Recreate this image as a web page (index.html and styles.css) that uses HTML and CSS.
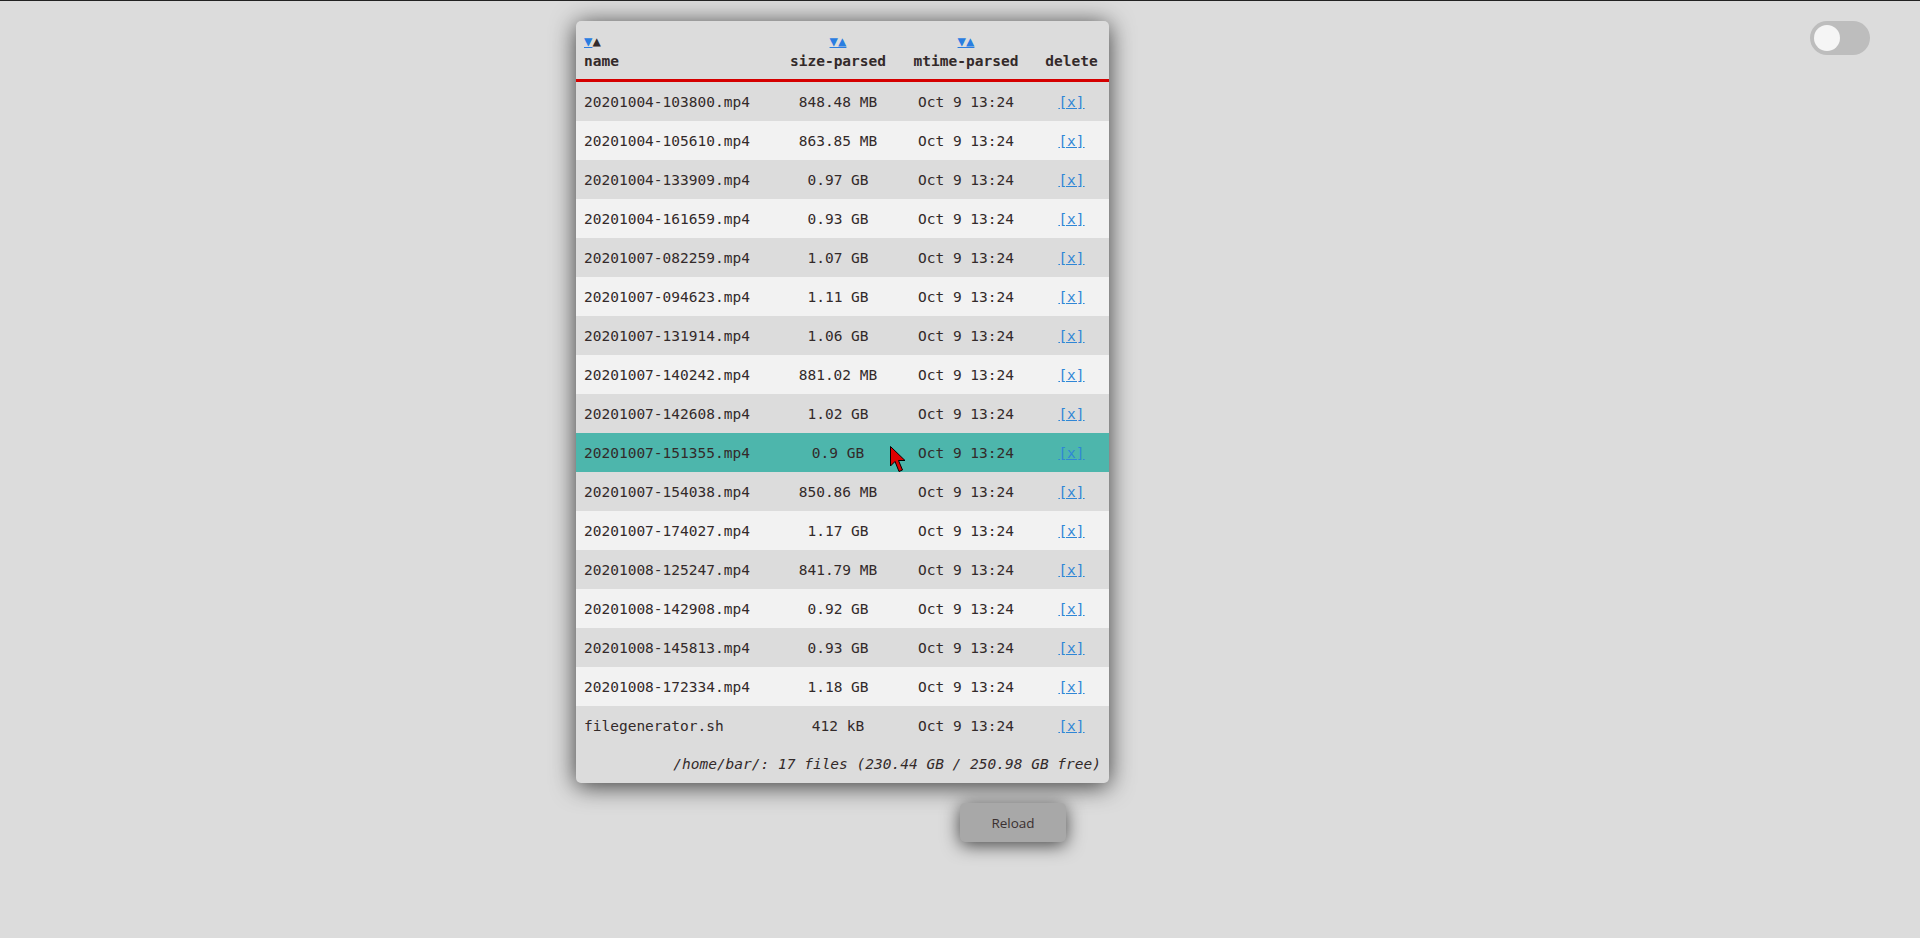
FILE: index.html
```html
<!DOCTYPE html>
<html>
<head>
<meta charset="utf-8">
<title>Files</title>
<link rel="stylesheet" href="styles.css">
</head>
<body>
<div class="page">
  <div class="panel">
    <table class="files">
      <colgroup>
        <col class="c-name"><col class="c-size"><col class="c-mtime"><col class="c-del">
      </colgroup>
      <thead>
        <tr>
          <th class="left"><div class="sort"><a href="#">▼</a><span>▲</span></div><div class="label">name</div></th>
          <th><div class="sort"><a href="#">▼</a><a href="#">▲</a></div><div class="label">size-parsed</div></th>
          <th><div class="sort"><a href="#">▼</a><a href="#">▲</a></div><div class="label">mtime-parsed</div></th>
          <th><div class="sort">&nbsp;</div><div class="label">delete</div></th>
        </tr>
      </thead>
      <tbody>
        <tr><td class="left">20201004-103800.mp4</td><td>848.48 MB</td><td>Oct 9 13:24</td><td><a href="#">[x]</a></td></tr>
        <tr><td class="left">20201004-105610.mp4</td><td>863.85 MB</td><td>Oct 9 13:24</td><td><a href="#">[x]</a></td></tr>
        <tr><td class="left">20201004-133909.mp4</td><td>0.97 GB</td><td>Oct 9 13:24</td><td><a href="#">[x]</a></td></tr>
        <tr><td class="left">20201004-161659.mp4</td><td>0.93 GB</td><td>Oct 9 13:24</td><td><a href="#">[x]</a></td></tr>
        <tr><td class="left">20201007-082259.mp4</td><td>1.07 GB</td><td>Oct 9 13:24</td><td><a href="#">[x]</a></td></tr>
        <tr><td class="left">20201007-094623.mp4</td><td>1.11 GB</td><td>Oct 9 13:24</td><td><a href="#">[x]</a></td></tr>
        <tr><td class="left">20201007-131914.mp4</td><td>1.06 GB</td><td>Oct 9 13:24</td><td><a href="#">[x]</a></td></tr>
        <tr><td class="left">20201007-140242.mp4</td><td>881.02 MB</td><td>Oct 9 13:24</td><td><a href="#">[x]</a></td></tr>
        <tr><td class="left">20201007-142608.mp4</td><td>1.02 GB</td><td>Oct 9 13:24</td><td><a href="#">[x]</a></td></tr>
        <tr class="hover"><td class="left">20201007-151355.mp4</td><td class="cursor-cell">0.9 GB<svg class="cursor" width="16" height="27" viewBox="0 0 16 27"><polygon points="0.5,0.5 0.5,20 5,15.5 9,25.5 12.5,24 8.5,14.5 15,14.5" fill="#e00000" stroke="#000" stroke-width="1"/></svg></td><td>Oct 9 13:24</td><td><a href="#">[x]</a></td></tr>
        <tr><td class="left">20201007-154038.mp4</td><td>850.86 MB</td><td>Oct 9 13:24</td><td><a href="#">[x]</a></td></tr>
        <tr><td class="left">20201007-174027.mp4</td><td>1.17 GB</td><td>Oct 9 13:24</td><td><a href="#">[x]</a></td></tr>
        <tr><td class="left">20201008-125247.mp4</td><td>841.79 MB</td><td>Oct 9 13:24</td><td><a href="#">[x]</a></td></tr>
        <tr><td class="left">20201008-142908.mp4</td><td>0.92 GB</td><td>Oct 9 13:24</td><td><a href="#">[x]</a></td></tr>
        <tr><td class="left">20201008-145813.mp4</td><td>0.93 GB</td><td>Oct 9 13:24</td><td><a href="#">[x]</a></td></tr>
        <tr><td class="left">20201008-172334.mp4</td><td>1.18 GB</td><td>Oct 9 13:24</td><td><a href="#">[x]</a></td></tr>
        <tr><td class="left">filegenerator.sh</td><td>412 kB</td><td>Oct 9 13:24</td><td><a href="#">[x]</a></td></tr>
      </tbody>
    </table>
    <div class="footer">/home/bar/: 17 files (230.44 GB / 250.98 GB free)</div>
  </div>
  <button class="reload">Reload</button>
</div>
<label class="switch"><span class="knob"></span></label>
</body>
</html>
```

FILE: styles.css
```css
html, body {
  margin: 0;
  padding: 0;
}
body {
  background: #dcdcdc;
  border-top: 1px solid #222;
  min-height: 937px;
  font-family: "DejaVu Sans Mono", "Liberation Mono", monospace;
  color: #332a2a;
}
.page {
  display: flex;
  flex-direction: column;
  align-items: flex-start;
  padding-top: 20px;
}
.panel {
  margin-left: 576px;
  width: 533px;
  background: #dcdcdc;
  border-radius: 5px;
  overflow: hidden;
  box-shadow: 0 3px 24px rgba(0, 0, 0, 0.75);
}
.files {
  width: 533px;
  table-layout: fixed;
  border-collapse: collapse;
  font-size: 14.5px;
}
.c-name { width: 202px; }
.c-size { width: 120px; }
.c-mtime { width: 136px; }
.c-del { width: 75px; }
.files th {
  padding: 12px 0 8px;
  text-align: center;
  font-weight: bold;
  line-height: 19px;
  border-bottom: 3px solid #d50000;
  vertical-align: top;
}
.files th.left, .files td.left {
  text-align: left;
  padding-left: 8px;
}
.sort {
  font-size: 14px;
  font-weight: normal;
  height: 19px;
  line-height: 16px;
}
.sort a {
  color: #2a7de1;
}
.sort span {
  color: #332a2a;
}
.files td {
  height: 39px;
  padding: 0;
  text-align: center;
  white-space: nowrap;
}
.files tbody tr:nth-child(even) {
  background: #f2f2f2;
}
.files tbody tr.hover {
  background: #4db6ac;
}
.files td a {
  color: #2f86d6;
}
.cursor-cell {
  position: relative;
}
.cursor {
  position: absolute;
  left: 112px;
  top: 13px;
}
.footer {
  height: 38px;
  line-height: 38px;
  text-align: right;
  padding-right: 8px;
  font-style: italic;
  font-size: 14.5px;
}
.reload {
  margin-top: 20px;
  margin-left: 960px;
  width: 106px;
  height: 39px;
  border: none;
  border-radius: 5px;
  background: #a8a8a8;
  color: #3a3030;
  font-family: "Open Sans", "Liberation Sans", sans-serif;
  font-size: 13.5px;
  box-shadow: 0 3px 18px rgba(0, 0, 0, 0.7);
  cursor: pointer;
}
.switch {
  position: absolute;
  top: 21px;
  right: 50px;
  width: 60px;
  height: 34px;
  border-radius: 17px;
  background: #bdbdbd;
}
.knob {
  position: absolute;
  left: 4px;
  top: 4px;
  width: 26px;
  height: 26px;
  border-radius: 50%;
  background: #f5f5f5;
}
```
